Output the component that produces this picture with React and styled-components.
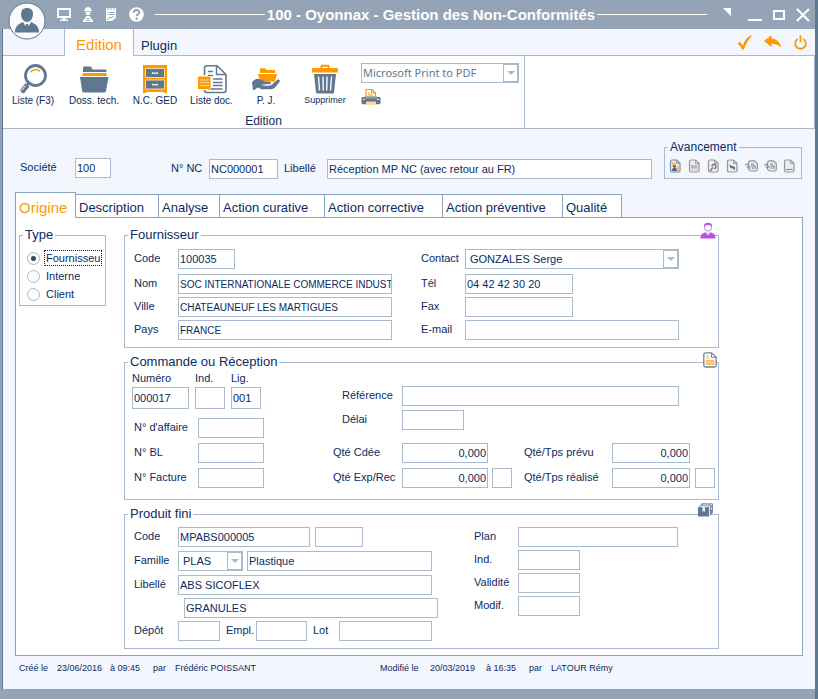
import React from 'react';
import styled, { createGlobalStyle } from 'styled-components';

const color = {
  frame: '#94a3b6',
  edge: '#5f7891',
  page: '#f3f6fc',
  line: '#a8bacc',
  tabLine: '#8ba5bf',
  text: '#0a2c62',
  slate: '#60788f',
  orange: '#ff9900',
};

const App = () => {
  return (
    <>
      <GlobalStyle />
      <Window.Frame>
        <TitleBar />
        <Window.Body>
          <Ribbon />
          <DocumentHeader />
          <Tabs />
          <Panel.Wrapper>
            <OriginType />
            <Panel.Sections>
              <Supplier />
              <Order />
              <Product />
            </Panel.Sections>
          </Panel.Wrapper>
          <Footer />
        </Window.Body>
      </Window.Frame>
    </>
  );
};

const TitleBar = () => {
  return (
    <Title.Wrapper>
      <Title.Avatar aria-label="Utilisateur">
        <AvatarIcon />
      </Title.Avatar>
      <Title.Tools>
        <IconButton aria-label="Ecran">
          <ScreenIcon />
        </IconButton>
        <IconButton aria-label="Atelier">
          <WorkerIcon />
        </IconButton>
        <IconButton aria-label="Notes">
          <NotesIcon />
        </IconButton>
        <IconButton aria-label="Aide">
          <HelpIcon />
        </IconButton>
      </Title.Tools>
      <Title.Rule />
      <Title.Text>100 - Oyonnax - Gestion des Non-Conformités</Title.Text>
      <Title.Rule />
      <Title.Controls>
        <IconButton aria-label="Replier">
          <svg width="8" height="14" viewBox="0 0 8 14">
            <path d="M0 0h8v8z" fill="#fff" />
          </svg>
        </IconButton>
        <IconButton aria-label="Réduire">
          <svg width="14" height="14" viewBox="0 0 14 14">
            <path d="M0 11h14v2H0z" fill="#fff" />
          </svg>
        </IconButton>
        <IconButton aria-label="Agrandir">
          <svg width="12" height="14" viewBox="0 0 12 14">
            <path d="M1 3h10v8H1z" fill="none" stroke="#fff" strokeWidth="2" />
          </svg>
        </IconButton>
        <IconButton aria-label="Fermer">
          <svg width="14" height="14" viewBox="0 0 14 14">
            <path d="M1 1l12 12M13 1L1 13" stroke="#fff" strokeWidth="2.2" />
          </svg>
        </IconButton>
      </Title.Controls>
    </Title.Wrapper>
  );
};

const tools = [
  { name: 'Liste (F3)', icon: () => <SearchIcon /> },
  { name: 'Doss. tech.', icon: () => <FolderIcon /> },
  { name: 'N.C. GED', icon: () => <CabinetIcon /> },
  { name: 'Liste doc.', icon: () => <DocumentsIcon /> },
  { name: 'P. J.', icon: () => <AttachmentIcon /> },
  { name: 'Supprimer', icon: () => <TrashIcon /> },
];

const Ribbon = () => {
  return (
    <>
      <RibbonTabs.Wrapper>
        <RibbonTabs.Active>Edition</RibbonTabs.Active>
        <RibbonTabs.Tab>Plugin</RibbonTabs.Tab>
        <RibbonTabs.Actions>
          <IconButton aria-label="Valider">
            <CheckIcon />
          </IconButton>
          <IconButton aria-label="Retour">
            <BackIcon />
          </IconButton>
          <IconButton aria-label="Quitter">
            <PowerIcon />
          </IconButton>
        </RibbonTabs.Actions>
      </RibbonTabs.Wrapper>
      <Tools.Wrapper>
        <Tools.Group>
          <Tools.Items>
            {tools.map((tool) => (
              <Tools.Item key={tool.name}>
                {tool.icon()}
                {tool.name}
              </Tools.Item>
            ))}
            <Tools.Printer>
              <Select label="Imprimante" value="Microsoft Print to PDF" printer />
              <IconButton aria-label="Imprimer">
                <PrinterIcon />
              </IconButton>
            </Tools.Printer>
          </Tools.Items>
          <Tools.Caption>Edition</Tools.Caption>
        </Tools.Group>
      </Tools.Wrapper>
    </>
  );
};

const steps = ['photo', 'text', 'search', 'image', 'edit', 'edit', 'blank'];

const DocumentHeader = () => {
  return (
    <Head.Wrapper>
      <Head.Company>
        <Label htmlFor="societe" $width={55}>
          Société
        </Label>
        <Input id="societe" $width={36} defaultValue="100" />
      </Head.Company>
      <Row>
        <Label htmlFor="numeroNc" $width={38}>
          N° NC
        </Label>
        <Input id="numeroNc" $width={69} defaultValue="NC000001" />
      </Row>
      <Head.Title>
        <Label htmlFor="libelleNc" $width={43}>
          Libellé
        </Label>
        <Input
          id="libelleNc"
          defaultValue="Réception MP NC (avec retour au FR)"
        />
      </Head.Title>
      <Head.Progress>
        <Legend $small>Avancement</Legend>
        <Head.Steps>
          {steps.map((kind, index) => (
            <IconButton key={index} aria-label={`Etape ${index + 1}`}>
              <StepIcon kind={kind} />
            </IconButton>
          ))}
        </Head.Steps>
      </Head.Progress>
    </Head.Wrapper>
  );
};

const tabs = [
  { name: 'Description', width: 83 },
  { name: 'Analyse', width: 61 },
  { name: 'Action curative', width: 105 },
  { name: 'Action corrective', width: 118 },
  { name: 'Action préventive', width: 120 },
  { name: 'Qualité', width: 59 },
];

const Tabs = () => {
  return (
    <TabBar.Wrapper>
      <TabBar.Active>Origine</TabBar.Active>
      {tabs.map((tab) => (
        <TabBar.Tab key={tab.name} $width={tab.width}>
          {tab.name}
        </TabBar.Tab>
      ))}
    </TabBar.Wrapper>
  );
};

const OriginType = () => {
  return (
    <Panel.Type>
      <Legend>Type</Legend>
      <RadioRow>
        <Radio type="radio" name="type" defaultChecked />
        <RadioText $focused>Fournisseu</RadioText>
      </RadioRow>
      <RadioRow>
        <Radio type="radio" name="type" />
        <RadioText>Interne</RadioText>
      </RadioRow>
      <RadioRow>
        <Radio type="radio" name="type" />
        <RadioText>Client</RadioText>
      </RadioRow>
    </Panel.Type>
  );
};

const Supplier = () => {
  return (
    <Section.Wrapper>
      <Section.Box>
        <Legend>Fournisseur</Legend>
        <SupplierGrid>
          <Stack $gap={3}>
            <Row $after={2}>
              <Label htmlFor="codeFr" $width={44}>
                Code
              </Label>
              <Input id="codeFr" $width={57} defaultValue="100035" />
            </Row>
            <Row>
              <Label htmlFor="nomFr" $width={44}>
                Nom
              </Label>
              <Input
                id="nomFr"
                $width={214}
                $small
                defaultValue="SOC INTERNATIONALE COMMERCE INDUSTRIE"
              />
            </Row>
            <Row>
              <Label htmlFor="villeFr" $width={44}>
                Ville
              </Label>
              <Input
                id="villeFr"
                $width={214}
                $small
                defaultValue="CHATEAUNEUF LES MARTIGUES"
              />
            </Row>
            <Row>
              <Label htmlFor="paysFr" $width={44}>
                Pays
              </Label>
              <Input id="paysFr" $width={214} $small defaultValue="FRANCE" />
            </Row>
          </Stack>
          <Stack $gap={3}>
            <Row $after={2}>
              <Label htmlFor="contact" $width={44}>
                Contact
              </Label>
              <Select id="contact" width={214} value="GONZALES Serge" />
            </Row>
            <Row>
              <Label htmlFor="tel" $width={44}>
                Tél
              </Label>
              <Input id="tel" $width={108} defaultValue="04 42 42 30 20" />
            </Row>
            <Row>
              <Label htmlFor="fax" $width={44}>
                Fax
              </Label>
              <Input id="fax" $width={108} />
            </Row>
            <Row>
              <Label htmlFor="email" $width={44}>
                E-mail
              </Label>
              <Input id="email" $width={214} />
            </Row>
          </Stack>
        </SupplierGrid>
      </Section.Box>
      <Section.Corner aria-label="Fiche fournisseur" $top={-6} $right={3}>
        <PersonIcon />
      </Section.Corner>
    </Section.Wrapper>
  );
};

const Order = () => {
  return (
    <Section.Wrapper>
      <Section.Box>
        <Legend>Commande ou Réception</Legend>
        <OrderBlock.Wrapper>
          <div>
            <OrderBlock.Number>
              <OrderBlock.Cell>
                <Label htmlFor="numero">Numéro</Label>
                <Input id="numero" $width={57} $tall defaultValue="000017" />
              </OrderBlock.Cell>
              <OrderBlock.Cell>
                <Label htmlFor="indCde">Ind.</Label>
                <Input id="indCde" $width={30} $tall />
              </OrderBlock.Cell>
              <OrderBlock.Cell>
                <Label htmlFor="ligne">Lig.</Label>
                <Input id="ligne" $width={30} $tall defaultValue="001" />
              </OrderBlock.Cell>
            </OrderBlock.Number>
            <OrderBlock.Numbers>
              <Row>
                <Label htmlFor="affaire" $width={64}>
                  N° d'affaire
                </Label>
                <Input id="affaire" $width={66} />
              </Row>
              <Row>
                <Label htmlFor="bl" $width={64}>
                  N° BL
                </Label>
                <Input id="bl" $width={66} />
              </Row>
              <Row>
                <Label htmlFor="facture" $width={64}>
                  N° Facture
                </Label>
                <Input id="facture" $width={66} />
              </Row>
            </OrderBlock.Numbers>
          </div>
          <OrderBlock.Details>
            <OrderBlock.Reference>
              <Row>
                <Label htmlFor="reference" $width={60}>
                  Référence
                </Label>
                <Input id="reference" $width={277} />
              </Row>
              <Row>
                <Label htmlFor="delai" $width={60}>
                  Délai
                </Label>
                <Input id="delai" $width={62} />
              </Row>
            </OrderBlock.Reference>
            <OrderBlock.Quantities>
              <Label htmlFor="qteCdee">Qté Cdée</Label>
              <Input id="qteCdee" $number defaultValue="0,000" />
              <span />
              <Label htmlFor="prevu">Qté/Tps prévu</Label>
              <Input id="prevu" $number defaultValue="0,000" />
              <span />
              <Label htmlFor="qteExp">Qté Exp/Rec</Label>
              <Input id="qteExp" $number defaultValue="0,000" />
              <Input aria-label="Unité reçue" $width={20} />
              <Label htmlFor="realise">Qté/Tps réalisé</Label>
              <Input id="realise" $number defaultValue="0,000" />
              <Input aria-label="Unité réalisée" $width={20} />
            </OrderBlock.Quantities>
          </OrderBlock.Details>
        </OrderBlock.Wrapper>
      </Section.Box>
      <Section.Corner aria-label="Document" $top={-3} $right={2}>
        <PageIcon />
      </Section.Corner>
    </Section.Wrapper>
  );
};

const Product = () => {
  return (
    <Section.Wrapper>
      <Section.Box>
        <Legend>Produit fini</Legend>
        <ProductGrid>
          <Stack $gap={3}>
            <Row $after={1} $gap={5}>
              <Row>
                <Label htmlFor="codeProduit" $width={44}>
                  Code
                </Label>
                <Input
                  id="codeProduit"
                  $width={132}
                  defaultValue="MPABS000005"
                />
              </Row>
              <Input aria-label="Indice produit" $width={48} />
            </Row>
            <Row $after={1} $gap={4}>
              <Row>
                <Label htmlFor="famille" $width={44}>
                  Famille
                </Label>
                <Select id="famille" width={65} value="PLAS" />
              </Row>
              <Input
                aria-label="Nom de la famille"
                $width={185}
                defaultValue="Plastique"
              />
            </Row>
            <Row>
              <Label htmlFor="libelleProduit" $width={44}>
                Libellé
              </Label>
              <Input
                id="libelleProduit"
                $width={254}
                defaultValue="ABS SICOFLEX"
              />
            </Row>
            <Row $end>
              <Input
                aria-label="Libellé suite"
                $width={254}
                defaultValue="GRANULES"
              />
            </Row>
            <Row $gap={6}>
              <Row>
                <Label htmlFor="depot" $width={44}>
                  Dépôt
                </Label>
                <Input id="depot" $width={42} />
              </Row>
              <Row>
                <Label htmlFor="empl" $width={30}>
                  Empl.
                </Label>
                <Input id="empl" $width={51} />
              </Row>
              <Row>
                <Label htmlFor="lot" $width={26}>
                  Lot
                </Label>
                <Input id="lot" $width={93} />
              </Row>
            </Row>
          </Stack>
          <Stack $gap={3}>
            <Row>
              <Label htmlFor="plan" $width={44}>
                Plan
              </Label>
              <Input id="plan" $width={160} />
            </Row>
            <Row>
              <Label htmlFor="indPlan" $width={44}>
                Ind.
              </Label>
              <Input id="indPlan" $width={62} />
            </Row>
            <Row>
              <Label htmlFor="validite" $width={44}>
                Validité
              </Label>
              <Input id="validite" $width={62} />
            </Row>
            <Row>
              <Label htmlFor="modif" $width={44}>
                Modif.
              </Label>
              <Input id="modif" $width={62} />
            </Row>
          </Stack>
        </ProductGrid>
      </Section.Box>
      <Section.Corner aria-label="Article" $top={-5} $right={5}>
        <PackageIcon />
      </Section.Corner>
    </Section.Wrapper>
  );
};

const Footer = () => {
  return (
    <Foot.Wrapper>
      <Foot.Created>
        <span>Créé le</span>
        <span>23/06/2016</span>
        <span>à 09:45</span>
        <span>par</span>
        <span>Frédéric POISSANT</span>
      </Foot.Created>
      <Foot.Modified>
        <span>Modifié le</span>
        <span>20/03/2019</span>
        <span>à 16:35</span>
        <span>par</span>
        <span>LATOUR Rémy</span>
      </Foot.Modified>
    </Foot.Wrapper>
  );
};

const Select = ({ id, label, width, value, printer }) => {
  return (
    <Combo.Wrapper $width={width}>
      <Combo.Field id={id} aria-label={label} $printer={printer}>
        <option>{value}</option>
      </Combo.Field>
      <Combo.Arrow>
        <svg width="8" height="4" viewBox="0 0 8 4">
          <path d="M0 0h8L4 4z" fill={color.line} />
        </svg>
      </Combo.Arrow>
    </Combo.Wrapper>
  );
};

/* Icons */

const AvatarIcon = () => (
  <svg width="38" height="38" viewBox="0 0 38 38">
    <circle cx="19" cy="19" r="18" fill="#f8fafd" stroke="#5c7690" />
    <path
      d="M13 12c0-4 2.500-6 6-6s6 2 6 6c0 4-2.500 8-6 8s-6-4-6-8z"
      fill={color.slate}
    />
    <path
      d="M7 30.500c0-5 2-8 8-10.500l4 7 4-7c6 2.500 8 5.500 8 10.500z"
      fill={color.slate}
    />
    <path d="M18 22h2l1 3-2 3-2-3z" fill={color.slate} />
  </svg>
);

const ScreenIcon = () => (
  <svg width="14" height="15" viewBox="0 0 14 15">
    <path d="M1 2h12v8H1z" fill="none" stroke="#fff" strokeWidth="1.8" />
    <path d="M5.500 10h3v2.500H11V14H3v-1.500h2.500z" fill="#fff" />
  </svg>
);

const WorkerIcon = () => (
  <svg width="10" height="15" viewBox="0 0 10 15">
    <path d="M2 3c0-2 1.300-3 3-3s3 1 3 3h1v1.300H1V3z" fill="#fff" />
    <path d="M2.500 5h5c0 2-1 3.200-2.500 3.200S2.500 7 2.500 5z" fill="#fff" />
    <path d="M3 9h4l.5 2L10 13v2H0v-2l2.500-2z" fill="#fff" />
    <path d="M3.500 11.500h3M3 13.500h4" stroke={color.frame} strokeWidth=".8" />
  </svg>
);

const NotesIcon = () => (
  <svg width="12" height="15" viewBox="0 0 12 15">
    <path
      d="M1 1h1.500v2h1V1h2v2h1V1h2v2h1V1H11v9.500L7 14H1z"
      fill="#fff"
    />
    <path
      d="M2.500 5.500h1M4.500 5.500h5M2.500 7.500h1M4.500 7.500h5M2 13l3-3 1 1 3.500-2"
      fill="none"
      stroke={color.frame}
    />
  </svg>
);

const HelpIcon = () => (
  <svg width="15" height="15" viewBox="0 0 15 15">
    <circle cx="7.5" cy="7.5" r="7.3" fill="#fff" />
    <path
      d="M4.800 5.800c0-3.700 5.600-3.600 5.400-.3-.1 1.700-2.500 1.800-2.500 3.700"
      fill="none"
      stroke={color.frame}
      strokeWidth="2"
    />
    <circle cx="7.7" cy="11.7" r="1.2" fill={color.frame} />
  </svg>
);

const CheckIcon = () => (
  <svg width="15" height="15" viewBox="0 0 15 15">
    <path
      d="M.5 8.500L3 6.800l2.700 3.700C7.500 6 9.800 2.800 13.500.3l1.200.8C11.500 4.500 9 9 6.800 14.500H5.200C4 12.300 2.500 10.300.5 8.500z"
      fill={color.orange}
    />
  </svg>
);

const BackIcon = () => (
  <svg width="18" height="14" viewBox="0 0 18 14">
    <path
      d="M0 6l7.500-6v3.500c5 .3 8.500 3.500 10 9.500-2.500-3-5.500-4.300-10-4.300V12z"
      fill={color.orange}
    />
  </svg>
);

const PowerIcon = () => (
  <svg width="13" height="15" viewBox="0 0 13 15">
    <path
      d="M3.800 3.900a5.300 5.300 0 1 0 5.400 0"
      fill="none"
      stroke={color.orange}
      strokeWidth="1.8"
    />
    <path d="M6.500.3v7" stroke={color.orange} strokeWidth="1.8" />
  </svg>
);

const SearchIcon = () => (
  <svg width="28" height="30" viewBox="0 0 28 30">
    <circle
      cx="16.5"
      cy="11.5"
      r="10"
      fill="#fff"
      stroke={color.slate}
      strokeWidth="2.8"
    />
    <path d="M10.500 18l-3 3.500" stroke={color.slate} strokeWidth="2" />
    <path
      d="M6.500 19l4 3.500-5 6.200c-1.500 1.600-5-.8-3.800-3.500z"
      fill={color.slate}
    />
    <path d="M6.500 21.500l-4 5" stroke="#dfe5ec" strokeWidth="1.2" />
    <path
      d="M11.500 8.200c2.500-3.500 7-3.500 9.500-1"
      fill="none"
      stroke={color.orange}
      strokeWidth="1.6"
    />
  </svg>
);

const FolderIcon = () => (
  <svg width="30" height="30" viewBox="0 0 30 30">
    <path d="M4 9V4c0-1 .5-1.500 1.500-1.500h6.500l1.500 3H26c1 0 1.500.5 1.500 1.500v2z" fill={color.slate} />
    <path d="M3 8h25v5H3z" fill="#fff" />
    <path d="M3.500 10.500c0-1 .5-1.500 1.500-1.500h21.500c.8 0 1.200.5 1.200 1.500V12H3.500z" fill={color.orange} />
    <path d="M1 13h28.500l-2.500 14c-.2 1-.8 1.500-1.800 1.500H5c-1 0-1.600-.5-1.800-1.500z" fill={color.slate} />
  </svg>
);

const CabinetIcon = () => (
  <svg width="26" height="30" viewBox="0 0 26 30">
    <path d="M1 1h24v28h-3v-1H4v1H1z" fill={color.orange} />
    <path d="M3.500 4.500h19v9h-19zM3.500 16h19v9h-19z" fill={color.slate} stroke="#f7d7a0" />
    <path d="M10 8h6v2h-6zM10 19.500h6v2h-6z" fill="#dbe2ea" />
    <path d="M11 8h4M11 19.500h4" stroke={color.slate} />
  </svg>
);

const DocumentsIcon = () => (
  <svg width="30" height="30" viewBox="0 0 30 30">
    <path
      d="M7.500 11V4c0-1.500.8-2.300 2.300-2.300H20l9 8.800V26c0 1.800-.8 2.500-2.500 2.500H10c-1.500 0-2.500-.8-2.500-2.500"
      fill="#fff"
      stroke={color.slate}
      strokeWidth="1.6"
    />
    <path d="M19.500 2v8.500h9" fill="none" stroke={color.slate} strokeWidth="1.4" />
    <path
      d="M11 7.500h5M11 11.500h5M16 15h9.500M16 18.500h9.500M16 21.500h9.500M11 25h14.500"
      stroke={color.slate}
      strokeWidth="1.5"
    />
    <path d="M.5 12h13.500v13.500H.5z" fill="#fff" />
    <path d="M1 12.500h12.500V25H1z" fill={color.orange} />
    <path d="M2.500 16h9.500M2.500 18.500h9.500M2.500 21.500h9.500" stroke="#ffd597" />
  </svg>
);

const AttachmentIcon = () => (
  <svg width="30" height="30" viewBox="0 0 30 30">
    <path d="M9 5.500c0-.8.400-1.200 1.200-1.200h4L15.500 6H23c.8 0 1.200.4 1.200 1.200V9H9z" fill={color.orange} />
    <path d="M7 10h19l-2 7.500H12L8 14z" fill={color.orange} />
    <path
      d="M1 18c3-3.300 6.500-4 9.500-2.300L14 17.500h4.500c1.800.3 1.800 2.500 0 2.800h-6c4 1.500 7.500 1 9.500-.8l4.500-3.800c1.500-.8 3 .8 2 2.200L24 23.500c-1.200 1.200-2.500 1.700-4 1.700H10.500L7 23.500l-5 3z"
      fill={color.slate}
    />
    <path d="M11 20.500c4 1.700 8 1.500 11-1" fill="none" stroke="#fff" strokeWidth=".8" />
  </svg>
);

const TrashIcon = () => (
  <svg width="28" height="30" viewBox="0 0 28 30">
    <path d="M9.500 4V2c0-.8.5-1.200 1.200-1.200h6.600c.8 0 1.200.5 1.200 1.200v2h7c1 0 1.500.5 1.500 1.500v3H1v-3C1 4.500 1.500 4 2.500 4zM11.500 4h5V2.700h-5z" fill={color.orange} />
    <path d="M3 10h22l-2 18.500c-.1.800-.5 1-1.200 1H6.200c-.7 0-1.100-.3-1.200-1z" fill={color.slate} />
    <path d="M7.500 12.500l1 14M12 12.500l.3 14M16 12.500l-.3 14M20.500 12.500l-1 14" stroke="#f0f3f7" strokeWidth="1.5" />
  </svg>
);

const PrinterIcon = () => (
  <svg width="20" height="18" viewBox="0 0 20 18">
    <path d="M5 9V1.500h6L14.500 5v4z" fill="#fff" stroke={color.orange} strokeWidth="1.2" />
    <path d="M10.500 1.500V5H14M7 5h2M7 7h5" fill="none" stroke={color.orange} />
    <path d="M2 9h16c1 0 1.500.5 1.500 1.500V15c0 .8-.4 1.200-1.200 1.200H1.700C.9 16.200.5 15.800.5 15v-4.500C.5 9.500 1 9 2 9z" fill={color.slate} />
    <path d="M3.500 8.500h13V11h-13z" fill="#8397ab" />
    <path d="M5 13.500h10V17H5z" fill="#ffd9a0" />
    <path d="M2 11.500h1.500M16 11.500h2" stroke="#fff" />
  </svg>
);

const PersonIcon = () => (
  <svg width="16" height="17" viewBox="0 0 16 17">
    <path d="M.5 16.500c0-4 1.500-5 5-6.200L8 13.500l2.500-3.200c3.500 1.200 5 2.200 5 6.200z" fill="#b455e6" />
    <circle cx="8" cy="5.500" r="3.600" fill="#fff" stroke="#b98bd6" />
    <path d="M4 5.500C3.500 2 5.500.7 8 .7S12.500 2 12 5.500c-.8-2-2-2.500-4-2.500S4.800 3.800 4 5.500z" fill="#b455e6" />
    <path d="M6.500 10.500L8 12l1.500-1.500" fill="none" stroke="#d9a6f5" />
  </svg>
);

const PageIcon = () => (
  <svg width="14" height="16" viewBox="0 0 14 16">
    <path
      d="M.8 2.500C.8 1.300 1.300.8 2.500.8H8.500l4.700 4.500v8c0 1.200-.5 1.700-1.700 1.700h-9C1.300 15 .8 14.500.8 13.300z"
      fill="#fff"
      stroke="#6d84a3"
      strokeWidth="1.3"
    />
    <path d="M8.500 1v4.300H13" fill="none" stroke="#6d84a3" />
    <path d="M3 4h3M3 6h3" stroke="#ffb347" />
    <path d="M2.800 8h8.700v5H2.800z" fill="#ffbf66" />
    <path d="M2.800 10.500h8.700" stroke="#ffe0b0" strokeWidth=".6" />
  </svg>
);

const PackageIcon = () => (
  <svg width="17" height="16" viewBox="0 0 17 16">
    <path d="M1 5l4.500-4H16l-3.500 4z" fill="#91a2b6" />
    <path d="M1 5h11v9.500H2c-.6 0-1-.4-1-1z" fill={color.slate} />
    <path d="M12.500 5L16 1v9.500l-3.500 4z" fill="#7489a0" />
    <path d="M5 5l4.500-3.800M8.500 5L12 1.200M12.400 5v9.500M1 4.700h11.500L16 1.200" fill="none" stroke="#eef2f7" strokeWidth=".8" />
    <path d="M5.500 5H8v5l-1.200-1L5.500 10zM14 6l1-1v2l-1 1z" fill="#eef2f7" />
  </svg>
);

const StepIcon = ({ kind }) => (
  <svg width="13" height="14" viewBox="0 0 13 14">
    <path
      d={
        kind === 'edit'
          ? 'M3.500 4.500c0-2 .5-2.700 2-2.700H9.500l2.800 2.700v6c0 1-.5 1.500-1.500 1.500H6c-1.500 0-2-1-2.500-2z'
          : 'M1.500 2.500c0-1 .5-1.500 1.500-1.500H7.500l3.500 3.300V11.500c0 1-.5 1.500-1.500 1.500H3c-1 0-1.500-.5-1.500-1.500z'
      }
      fill="#ececf2"
      stroke={kind === 'photo' ? '#7389ad' : '#95979f'}
      strokeWidth="1.2"
    />
    {kind !== 'edit' && (
      <path d="M7.500 1v3.500H11" fill="none" stroke="#95979f" strokeWidth=".9" />
    )}
    {kind === 'photo' && (
      <>
        <path d="M3 3.500h3.500v4H3zM8 7h2.500v5H8z" fill="#ffbe66" />
        <path d="M3 12c0-3 1-3.500 2.500-3.500S8 9 8 12z" fill="#53698a" />
        <circle cx="5.500" cy="7.200" r="1.500" fill="#53698a" />
      </>
    )}
    {kind === 'text' && (
      <>
        <path d="M3 6h6.500v3.500H3z" fill="#b9b7bd" />
        <path d="M3 11h6.500" stroke="#c9c8ce" />
      </>
    )}
    {kind === 'search' && (
      <path
        d="M5 7.500a2 2 0 1 1 2 2M6 8.500L3 12"
        fill="none"
        stroke="#77727a"
        strokeWidth="1.3"
      />
    )}
    {kind === 'image' && (
      <path d="M3 5.500l2 1 4 1.500v3.500L7 9.500 4.500 9z" fill="#6c7079" />
    )}
    {kind === 'edit' && (
      <path
        d="M0 6l2.500-1L6 9.500M1.500 7l2 2.500M6 5h3M6 7h5M7 9h4"
        fill="none"
        stroke="#7d8088"
      />
    )}
    {kind === 'blank' && <path d="M3 10.500h6.500" stroke="#85888f" />}
  </svg>
);

/* Styles */

const GlobalStyle = createGlobalStyle`
  * {
    box-sizing: border-box;
  }
  body {
    margin: 0;
    color: ${color.text};
    font-family: 'Liberation Sans', Arial, sans-serif;
    font-size: 11px;
  }
  button, input, select {
    color: inherit;
    font: inherit;
  }
`;

const Window = {
  Frame: styled.div`
    display: flex;
    flex-direction: column;
    min-height: 100vh;
    padding: 0 0 10px 2px;
    border-right: 3px solid ${color.edge};
    background-color: ${color.frame};
  `,
  Body: styled.main`
    flex: 1;
    border-left: 1px solid ${color.edge};
    background-color: ${color.page};
  `,
};

const IconButton = styled.button`
  display: flex;
  padding: 0;
  border: none;
  background: none;
  cursor: pointer;
`;

const Title = {
  Wrapper: styled.header`
    display: flex;
    position: relative;
    align-items: center;
    height: 29px;
    padding: 0 5px 0 55px;
  `,
  Avatar: styled(IconButton)`
    position: absolute;
    top: 2px;
    left: 6px;
    z-index: 1;
  `,
  Tools: styled.div`
    display: flex;
    gap: 12px;
    align-items: center;
    margin-right: 11px;
  `,
  Rule: styled.div`
    flex: 1;
    height: 1px;
    background-color: white;
  `,
  Text: styled.h1`
    margin: 0 2px;
    color: white;
    font-size: 15px;
    line-height: 18px;
  `,
  Controls: styled.div`
    display: flex;
    gap: 11px;
    align-items: center;
    margin-left: 16px;

    button:first-child {
      margin-right: 6px;
    }
  `,
};

const RibbonTabs = {
  Wrapper: styled.nav`
    display: flex;
    height: 27px;
    padding-left: 61px;
    border-bottom: 1px solid ${color.line};
  `,
  Active: styled.button`
    width: 70px;
    height: 27px;
    padding: 3px 0 0;
    border: solid ${color.line};
    border-width: 0 1px;
    background-color: white;
    color: ${color.orange};
    font-size: 15px;
  `,
  Tab: styled.button`
    padding: 6px 7px 0;
    border: none;
    background: none;
    font-size: 13px;
  `,
  Actions: styled.div`
    display: flex;
    gap: 12px;
    align-items: center;
    margin: 0 8px 0 auto;
  `,
};

const Tools = {
  Wrapper: styled.div`
    display: flex;
    border: solid ${color.line};
    border-width: 0 1px 1px 0;
    background-color: white;
  `,
  Group: styled.div`
    flex: 0 1 522px;
    border-right: 1px solid ${color.line};
  `,
  Items: styled.div`
    display: grid;
    grid-template-columns: 60px 62px 60px 53px 56px 67px 1fr;
    padding: 7px 5px 0 0;
  `,
  Item: styled.button`
    display: flex;
    flex-direction: column;
    gap: 1px;
    align-items: center;
    padding: 1px 0 0;
    border: none;
    background: none;
    font-size: 10px;
    line-height: 11px;
    white-space: nowrap;
    cursor: pointer;

    &:nth-child(6) {
      padding-right: 5px;
      font-size: 9px;
    }
  `,
  Printer: styled.div`
    display: flex;
    flex-direction: column;
    gap: 5px;
    align-items: flex-start;
  `,
  Caption: styled.div`
    padding: 8px 0 0;
    font-size: 12px;
    line-height: 14px;
    text-align: center;
  `,
};

const Row = styled.div`
  display: flex;
  gap: ${({ $gap = 0 }) => $gap}px;
  align-items: center;
  justify-content: ${({ $end }) => ($end ? 'flex-end' : 'flex-start')};
  margin-bottom: ${({ $after = 0 }) => $after}px;
`;

const Stack = styled.div`
  display: flex;
  flex-direction: column;
  gap: ${({ $gap }) => $gap}px;
`;

const Label = styled.label`
  flex: none;
  width: ${({ $width }) => ($width ? `${$width}px` : 'auto')};
  padding-bottom: 2px;
  line-height: 14px;
  white-space: nowrap;
`;

const Input = styled.input`
  width: ${({ $width }) => ($width ? `${$width}px` : '100%')};
  min-width: 0;
  height: ${({ $tall }) => ($tall ? 22 : 20)}px;
  padding: ${({ $number }) => ($number ? '0 1px' : '0 0 0 1px')};
  border: 1px solid ${color.line};
  border-radius: 0;
  outline: none;
  background-color: white;
  font-size: ${({ $small }) => ($small ? 10 : 11)}px;
  text-align: ${({ $number }) => ($number ? 'right' : 'left')};
`;

const Combo = {
  Wrapper: styled.span`
    display: grid;
    width: ${({ $width }) => ($width ? `${$width}px` : '100%')};
    height: 20px;
    border: 1px solid ${color.line};
    background-color: white;
  `,
  Field: styled.select`
    grid-area: 1 / 1;
    min-width: 0;
    padding: ${({ $printer }) => ($printer ? '0 16px 1px 1px' : '0 16px 1px 4px')};
    border: none;
    outline: none;
    background: none;
    appearance: none;
    ${({ $printer }) =>
      $printer &&
      `
      color: #5f7690;
      font-family: 'Noto Sans', sans-serif;
    `}
  `,
  Arrow: styled.span`
    display: flex;
    grid-area: 1 / 1;
    align-items: center;
    justify-content: center;
    justify-self: end;
    width: 15px;
    border: 1px solid ${color.line};
    pointer-events: none;
  `,
};

const Legend = styled.legend`
  padding: 0 2px;
  font-size: ${({ $small }) => ($small ? 12 : 13)}px;
  line-height: 14px;
`;

const FieldSet = styled.fieldset`
  min-width: 0;
  margin: 0;
  padding: 0 3px;
  border: 1px solid ${color.line};
`;

const Head = {
  Wrapper: styled.div`
    display: flex;
    align-items: flex-end;
    padding: 11px 13px 0 17px;
  `,
  Company: styled(Row)`
    margin-right: 60px;
    margin-bottom: 1px;
  `,
  Title: styled(Row)`
    flex: 1;
    margin: 0 12px 0 6px;
  `,
  Progress: styled(FieldSet)`
    flex: none;
    width: 138px;
    padding-bottom: 5px;
  `,
  Steps: styled.div`
    display: flex;
    justify-content: space-between;
    padding: 5px 2px 0 1px;
  `,
};

const TabBar = {
  Wrapper: styled.nav`
    display: flex;
    align-items: flex-end;
    padding: 13px 12px 0;
  `,
  Active: styled.button`
    position: relative;
    width: 61px;
    height: 26px;
    margin-bottom: -1px;
    padding: 4px 3px 0;
    border: 1px solid ${color.tabLine};
    border-bottom: none;
    background-color: white;
    color: ${color.orange};
    font-size: 15px;
    text-align: left;
  `,
  Tab: styled.button`
    width: ${({ $width }) => $width}px;
    height: 23px;
    padding: 3px 0 0 3px;
    border: solid ${color.tabLine};
    border-width: 1px 1px 0 0;
    background-color: white;
    font-size: 13px;
    text-align: left;
    white-space: nowrap;
  `,
};

const Panel = {
  Wrapper: styled.div`
    display: flex;
    gap: 18px;
    align-items: flex-start;
    margin: 0 12px;
    padding: 10px 3px 6px;
    border: 1px solid ${color.tabLine};
    background-color: white;
  `,
  Type: styled(FieldSet)`
    flex: none;
    width: 87px;
    padding-bottom: 2px;

    legend {
      margin-bottom: 7px;
    }
  `,
  Sections: styled.div`
    display: flex;
    flex: 0 1 595px;
    flex-direction: column;
    gap: 7px;
  `,
};

const RadioRow = styled.label`
  display: flex;
  gap: 5px;
  align-items: center;
  height: 18px;
  padding-left: 4px;
`;

const Radio = styled.input`
  flex: none;
  width: 13px;
  height: 13px;
  margin: 0;
  border: 1px solid ${color.line};
  border-radius: 50%;
  background-color: #fbfcfe;
  appearance: none;

  &:checked {
    background-image: radial-gradient(circle, #34475c 2px, transparent 3px);
  }
`;

const RadioText = styled.span`
  padding: 0 1px;
  line-height: 14px;
  outline: ${({ $focused }) => ($focused ? '1px dotted #1a1a1a' : 'none')};
`;

const Section = {
  Wrapper: styled.section`
    position: relative;
  `,
  Box: styled(FieldSet)``,
  Corner: styled(IconButton)`
    position: absolute;
    top: ${({ $top }) => $top}px;
    right: ${({ $right }) => $right}px;
  `,
};

const SupplierGrid = styled.div`
  display: grid;
  grid-template-columns: 258px 258px;
  gap: 29px;
  padding: 7px 0 7px 6px;
`;

const OrderBlock = {
  Wrapper: styled.div`
    display: flex;
    justify-content: space-between;
    padding: 2px 0 11px 4px;
  `,
  Number: styled.div`
    display: flex;
    gap: 6px;
  `,
  Cell: styled.div`
    display: flex;
    flex-direction: column;
  `,
  Numbers: styled.div`
    display: flex;
    flex-direction: column;
    gap: 5px;
    padding: 9px 0 0 2px;
  `,
  Details: styled.div`
    padding-top: 15px;
  `,
  Reference: styled.div`
    display: flex;
    flex-direction: column;
    gap: 4px;
    padding: 0 0 13px 9px;
  `,
  Quantities: styled.div`
    display: grid;
    grid-template-columns: 69px 86px 36px 88px 78px 25px;
    row-gap: 5px;
    align-items: center;

    input:nth-child(3n) {
      margin-left: 4px;
    }
    input:last-child {
      margin-left: 5px;
    }
  `,
};

const ProductGrid = styled.div`
  display: grid;
  grid-template-columns: 304px 204px;
  gap: 36px;
  padding: 6px 0 7px 6px;
`;

const Foot = {
  Wrapper: styled.footer`
    display: flex;
    padding: 6px 16px 0;
    font-size: 9px;
    line-height: 12px;
    white-space: nowrap;
  `,
  Created: styled.div`
    display: grid;
    flex: 0 1 361px;
    grid-template-columns: 38px 53px 43px 22px auto;
  `,
  Modified: styled.div`
    display: grid;
    grid-template-columns: 50px 56px 43px 22px auto;
  `,
};

export default App;
